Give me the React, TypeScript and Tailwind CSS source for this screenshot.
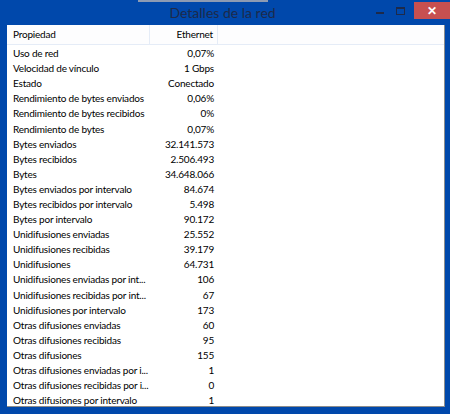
const rows: [string, string][] = [
  ['Uso de red', '0,07%'],
  ['Velocidad de vínculo', '1 Gbps'],
  ['Estado', 'Conectado'],
  ['Rendimiento de bytes enviados', '0,06%'],
  ['Rendimiento de bytes recibidos', '0%'],
  ['Rendimiento de bytes', '0,07%'],
  ['Bytes enviados', '32.141.573'],
  ['Bytes recibidos', '2.506.493'],
  ['Bytes', '34.648.066'],
  ['Bytes enviados por intervalo', '84.674'],
  ['Bytes recibidos por intervalo', '5.498'],
  ['Bytes por intervalo', '90.172'],
  ['Unidifusiones enviadas', '25.552'],
  ['Unidifusiones recibidas', '39.179'],
  ['Unidifusiones', '64.731'],
  ['Unidifusiones enviadas por int...', '106'],
  ['Unidifusiones recibidas por int...', '67'],
  ['Unidifusiones por intervalo', '173'],
  ['Otras difusiones enviadas', '60'],
  ['Otras difusiones recibidas', '95'],
  ['Otras difusiones', '155'],
  ['Otras difusiones enviadas por i...', '1'],
  ['Otras difusiones recibidas por i...', '0'],
  ['Otras difusiones por intervalo', '1'],
]

export default function App() {
  return (
    <div
      className="flex h-[414px] w-[450px] flex-col overflow-hidden bg-[#0048ab]"
      style={{ fontFamily: 'Lato, "Open Sans", sans-serif' }}
    >
      {/* sliver of the window behind */}
      <div className="flex h-[2px] shrink-0">
        <div className="ml-[138px] h-[2px] w-[130px] bg-[#8d9bb3]" />
      </div>

      {/* title bar */}
      <div className="flex h-[23px] items-start">
        <div className="w-[370px] text-center text-[14px] leading-[22px] text-[#1d2a4a]">
          <span className="ml-[80px]">Detalles de la red</span>
        </div>
        <div className="flex h-[18px] w-[30px] items-center justify-center">
          <div className="mt-[4px] h-[2px] w-[8px] bg-[#1d2a4a]" />
        </div>
        <div className="flex h-[18px] w-[12px] items-center justify-center">
          <div className="h-[8px] w-[9px] border border-t-2 border-[#1d2a4a]" />
        </div>
        <div className="ml-[8px] flex h-[17px] w-[36px] items-center justify-center bg-[#c75050] text-[12px] font-bold leading-none text-white">
          ✕
        </div>
      </div>

      {/* content */}
      <div className="mx-[7px] flex h-[382px] w-[438px] flex-col border-r border-b border-[#8c8c8c] bg-white text-[10px] tracking-[-0.2px] text-black">
        <div className="flex h-[20px] shrink-0 items-center border-b border-[#e5ecf7] bg-[#fdfdfe]">
          <div className="w-[143px] border-r border-[#e5ecf7] pl-[6px] leading-[19px]">Propiedad</div>
          <div className="w-[68px] border-r border-[#e5ecf7] pr-[4px] text-right leading-[19px]">Ethernet</div>
        </div>
        <div className="pt-[1px]">
          {rows.map(([k, v]) => (
            <div key={k} className="flex h-[15.1px] items-center leading-[15px]">
              <div className="w-[143px] whitespace-nowrap pl-[6px]">{k}</div>
              <div className="w-[68px] pr-[4px] text-right">{v}</div>
            </div>
          ))}
        </div>
      </div>
    </div>
  )
}
